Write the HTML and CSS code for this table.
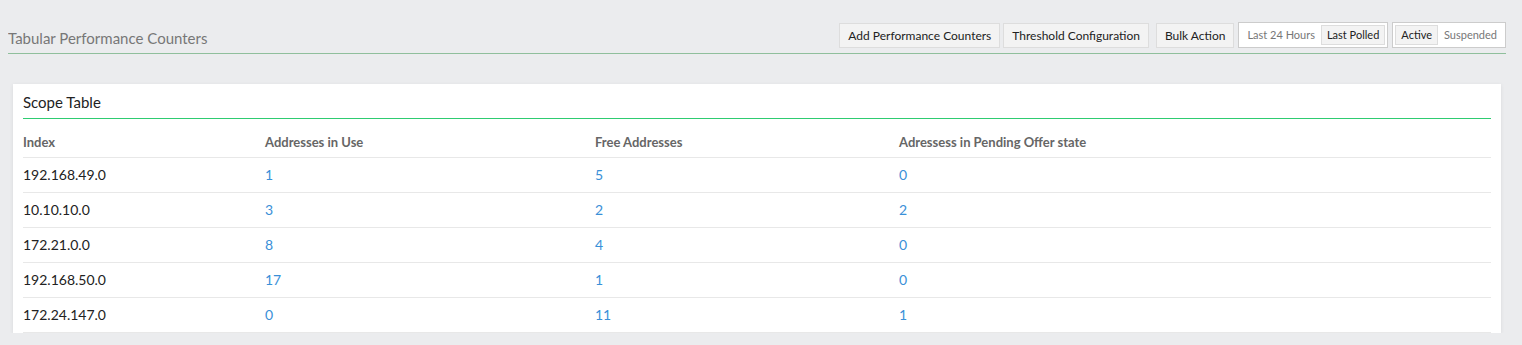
FILE: index.html
```html
<!DOCTYPE html>
<html lang="en">
<head>
    <meta charset="UTF-8">
    <title>Tabular Performance Counters</title>
    <link rel="stylesheet" href="styles.css">
</head>
<body>
    <div class="page-header">
        <h1 class="page-title">Tabular Performance Counters</h1>
        <div class="toolbar">
            <button class="tool-btn">Add Performance Counters</button>
            <button class="tool-btn">Threshold Configuration</button>
            <button class="tool-btn spaced">Bulk Action</button>
            <div class="toggle-group">
                <span class="toggle-item">Last 24 Hours</span>
                <span class="toggle-item selected">Last Polled</span>
            </div>
            <div class="toggle-group">
                <span class="toggle-item selected">Active</span>
                <span class="toggle-item">Suspended</span>
            </div>
        </div>
    </div>

    <section class="card">
        <h2 class="card-title">Scope Table</h2>
        <table class="scope-table">
            <thead>
                <tr>
                    <th class="col-index">Index</th>
                    <th class="col-use">Addresses in Use</th>
                    <th class="col-free">Free Addresses</th>
                    <th>Adressess in Pending Offer state</th>
                </tr>
            </thead>
            <tbody>
                <tr><td>192.168.49.0</td><td><a href="#">1</a></td><td><a href="#">5</a></td><td><a href="#">0</a></td></tr>
                <tr><td>10.10.10.0</td><td><a href="#">3</a></td><td><a href="#">2</a></td><td><a href="#">2</a></td></tr>
                <tr><td>172.21.0.0</td><td><a href="#">8</a></td><td><a href="#">4</a></td><td><a href="#">0</a></td></tr>
                <tr><td>192.168.50.0</td><td><a href="#">17</a></td><td><a href="#">1</a></td><td><a href="#">0</a></td></tr>
                <tr><td>172.24.147.0</td><td><a href="#">0</a></td><td><a href="#">11</a></td><td><a href="#">1</a></td></tr>
            </tbody>
        </table>
    </section>
</body>
</html>
```

FILE: styles.css
```css
:root {
    --page-bg: #ebecee;
    --accent-green: #2ecc71;
    --link-blue: #3a90d8;
    --text-dark: #222;
    --text-muted: #777;
}

body {
    margin: 8px;
    background: var(--page-bg);
    color: var(--text-dark);
    font-family: Lato, "Open Sans", sans-serif;
}

/* HEADER */
.page-header {
    display: flex;
    justify-content: space-between;
    align-items: flex-end;
    padding-top: 14px;
    padding-bottom: 5px;
    margin-right: 8px;
    border-bottom: 1px solid #8fbf9c;
}

.page-title {
    margin: 0;
    font-size: 15px;
    font-weight: normal;
    line-height: 20px;
    color: var(--text-muted);
}

.toolbar {
    display: flex;
    align-items: center;
    gap: 3px;
}

.tool-btn {
    height: 25px;
    padding: 0 8px;
    background: #f3f3f3;
    border: 1px solid #ddd;
    font-family: inherit;
    font-size: 12px;
    color: var(--text-dark);
    cursor: pointer;
}

.tool-btn.spaced {
    margin-left: 4px;
}

.toggle-group {
    display: flex;
    align-items: center;
    height: 20px;
    padding: 2px;
    margin-left: 1px;
    background: #fff;
    border: 1px solid #ccc;
}

.toggle-item {
    padding: 0 5px;
    font-size: 11px;
    line-height: 18px;
    color: var(--text-muted);
    border: 1px solid transparent;
}

.toggle-item.selected {
    background: #f3f3f3;
    border-color: #ddd;
    color: var(--text-dark);
}

/* CARD */
.card {
    margin: 30px 13px 0 5px;
    padding: 8px 10px 0;
    background: #fff;
    box-shadow: 0 1px 4px rgba(0, 0, 0, 0.08);
}

.card-title {
    margin: 0;
    padding-bottom: 6px;
    font-size: 15px;
    font-weight: normal;
    line-height: 20px;
    border-bottom: 1px solid var(--accent-green);
}

.scope-table {
    width: 100%;
    border-collapse: collapse;
    font-size: 14px;
}

.scope-table th {
    padding: 15px 0 7px;
    text-align: left;
    font-size: 13px;
    font-weight: bold;
    line-height: 16px;
    color: #666;
    border-bottom: 1px solid #e8e8e8;
}

.col-index { width: 242px; }
.col-use { width: 330px; }
.col-free { width: 304px; }

.scope-table td {
    padding: 8px 0;
    line-height: 18px;
    border-bottom: 1px solid #e8e8e8;
}

.scope-table a {
    color: var(--link-blue);
    text-decoration: none;
}
```
